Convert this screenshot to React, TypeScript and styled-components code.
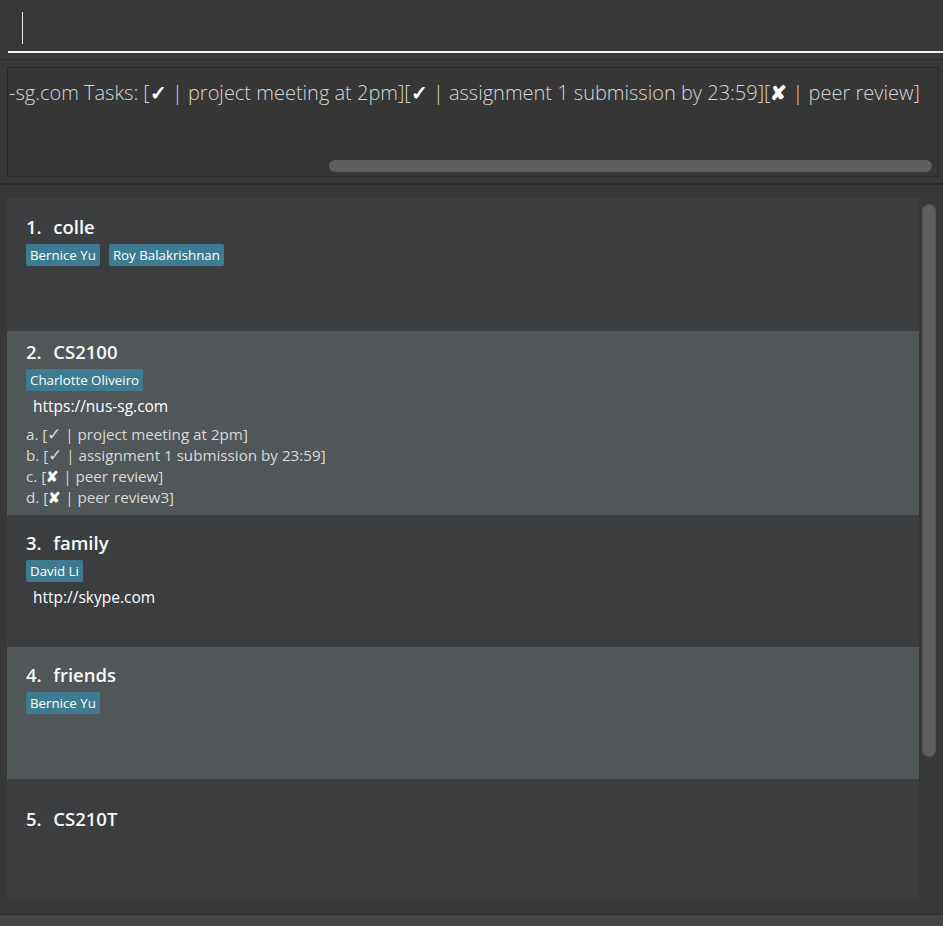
import React from "react";
import styled, { createGlobalStyle } from "styled-components";

const GlobalStyle = createGlobalStyle`
  html, body { margin: 0; padding: 0; background: #383838; }
  body { font-family: "Open Sans", "Noto Sans", sans-serif; }
  * { box-sizing: border-box; }
`;

const Page = styled.div`
  width: 943px;
  height: 926px;
  display: flex;
  flex-direction: column;
  background: #383838;
  overflow: hidden;
`;

const CommandSection = styled.div`
  height: 60px;
  padding: 0 0 0 8px;
  border-bottom: 1px solid #2e2e2e;
  display: flex;
  flex-direction: column;
`;

const CommandField = styled.div`
  height: 53px;
  border-bottom: 2px solid #f2f2f2;
  padding: 12px 0 0 14px;
`;

const Caret = styled.div`
  width: 1px;
  height: 32px;
  background: #e8e8e8;
`;

const ResultSection = styled.div`
  padding: 7px 4px 6px 7px;
  border-bottom: 2px solid #2c2c2c;
`;

const ResultBox = styled.div`
  height: 110px;
  border: 1px solid #2a2a2a;
  background: #363636;
  display: flex;
  flex-direction: column;
  overflow: hidden;
`;

const ResultText = styled.div`
  flex: 1;
  padding: 11px 0 0 1px;
  white-space: nowrap;
  font-family: "Open Sans", sans-serif;
  font-weight: 300;
  font-size: 20px;
  color: #d6d6d6;
`;

const Mark = styled.span`
  color: #ffffff;
  font-weight: 700;
`;

const HTrack = styled.div`
  height: 18px;
  padding: 2px 6px 4px 321px;
`;

const HThumb = styled.div`
  height: 12px;
  border-radius: 6px;
  background: #5f5f5f;
`;

const ListSection = styled.div`
  flex: 1;
  padding: 13px 0 14px 7px;
  display: flex;
  border-bottom: 1px solid #2b2b2b;
`;

const CardColumn = styled.div`
  width: 912px;
  height: 702px;
  overflow: hidden;
  display: flex;
  flex-direction: column;
`;

const VTrack = styled.div`
  flex: 1;
  padding: 6px 7px 0 3px;
`;

const VThumb = styled.div`
  height: 553px;
  border-radius: 7px;
  background: #5f5f5f;
  border: 1px solid #565656;
`;

const Card = styled.div<{ $alt: boolean; $top: number; $min: number }>`
  flex-shrink: 0;
  min-height: ${(p) => p.$min}px;
  padding: ${(p) => p.$top}px 12px 7px 19px;
  background: ${(p) => (p.$alt ? "#515658" : "#3c3d3f")};
  display: flex;
  flex-direction: column;
`;

const Title = styled.div`
  font-family: "Open Sans", sans-serif;
  font-weight: 600;
  font-size: 18.5px;
  line-height: 24px;
  color: #f8f8f8;
  white-space: pre;
  word-spacing: 1px;
`;

const Tags = styled.div`
  display: flex;
  gap: 9px;
  margin-top: 5px;
`;

const Tag = styled.span`
  height: 22px;
  padding: 0 4px;
  border-radius: 2px;
  background: #3e7b91;
  color: #ffffff;
  font-size: 13.3px;
  line-height: 22px;
`;

const Link = styled.div`
  margin-top: 5px;
  padding-left: 7px;
  font-size: 15.5px;
  line-height: 21px;
  color: #ffffff;
`;

const TaskList = styled.div`
  margin-top: 7px;
  display: flex;
  flex-direction: column;
`;

const Task = styled.div`
  font-size: 15.2px;
  line-height: 21.1px;
  color: #dadada;
  white-space: pre;
`;

const Check = styled.span`
  font-size: 17px;
  line-height: 0;
`;

const StatusBar = styled.div`
  height: 11px;
  background: #444444;
`;

type Group = {
  name: string;
  tags: string[];
  link?: string;
  tasks?: { done: boolean; text: string }[];
  top: number;
  min: number;
};

const groups: Group[] = [
  { name: "colle", tags: ["Bernice Yu", "Roy Balakrishnan"], top: 17, min: 133 },
  {
    name: "CS2100",
    tags: ["Charlotte Oliveiro"],
    link: "https://nus-sg.com",
    tasks: [
      { done: true, text: "project meeting at 2pm" },
      { done: true, text: "assignment 1 submission by 23:59" },
      { done: false, text: "peer review" },
      { done: false, text: "peer review3" },
    ],
    top: 9,
    min: 132,
  },
  { name: "family", tags: ["David Li"], link: "http://skype.com", top: 16, min: 132 },
  { name: "friends", tags: ["Bernice Yu"], top: 16, min: 132 },
  { name: "CS210T", tags: [], top: 28, min: 132 },
];

const letters = "abcdefghijklmnopqrstuvwxyz";

export default function App() {
  return (
    <Page>
      <GlobalStyle />
      <CommandSection>
        <CommandField>
          <Caret />
        </CommandField>
      </CommandSection>
      <ResultSection>
        <ResultBox>
          <ResultText>
            -sg.com Tasks: [<Mark>✓</Mark> | project meeting at 2pm][<Mark>✓</Mark> | assignment 1 submission by 23:59][<Mark>✘</Mark> | peer review]
          </ResultText>
          <HTrack>
            <HThumb />
          </HTrack>
        </ResultBox>
      </ResultSection>
      <ListSection>
        <CardColumn>
          {groups.map((g, i) => (
            <Card key={g.name} $alt={i % 2 === 1} $top={g.top} $min={g.min}>
              <Title>{`${i + 1}.  ${g.name}`}</Title>
              {g.tags.length > 0 && (
                <Tags>
                  {g.tags.map((t) => (
                    <Tag key={t}>{t}</Tag>
                  ))}
                </Tags>
              )}
              {g.link && <Link>{g.link}</Link>}
              {g.tasks && (
                <TaskList>
                  {g.tasks.map((t, j) => (
                    <Task key={j}>
                      {`${letters[j]}. [`}
                      {t.done ? <Check>✓</Check> : <Mark>✘</Mark>}
                      {` | ${t.text}]`}
                    </Task>
                  ))}
                </TaskList>
              )}
            </Card>
          ))}
        </CardColumn>
        <VTrack>
          <VThumb />
        </VTrack>
      </ListSection>
      <StatusBar />
    </Page>
  );
}
